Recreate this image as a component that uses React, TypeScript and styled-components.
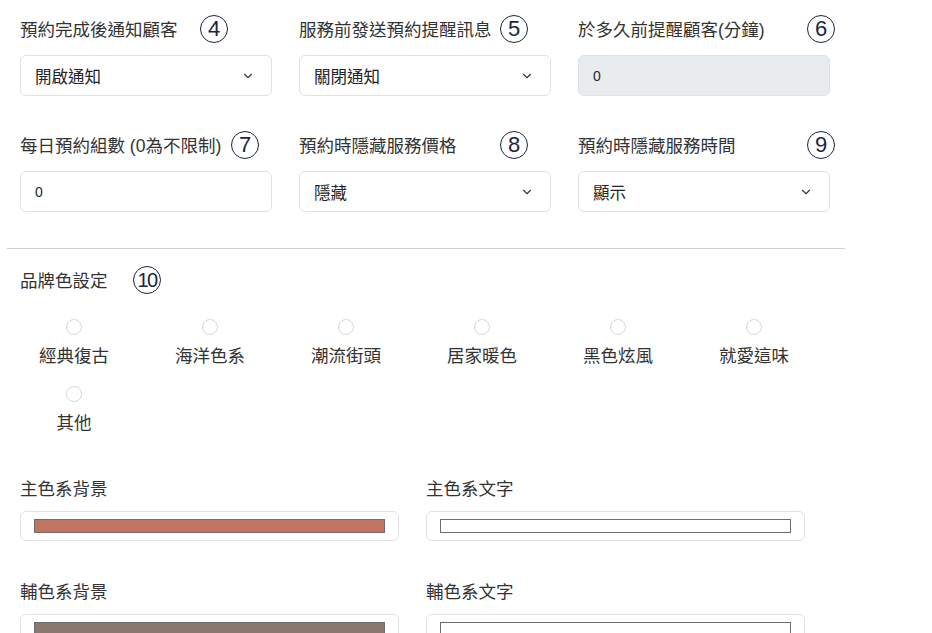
import { createGlobalStyle } from 'styled-components';
import styled from 'styled-components';
import { ChevronDown } from 'lucide-react';

const GlobalStyle = createGlobalStyle`
  body {
    margin: 0;
    background: #fff;
    overflow: hidden;
    font-family: "Liberation Sans", "Noto Sans CJK TC", sans-serif;
    color: #333;
  }
`

type Field = {
  label: string;
  badge: string;
  badgeX: number;
  kind: 'select' | 'input' | 'disabled';
  value: string;
};

// badgeX: left offset of the annotation circle inside its field
const topFields: Field[] = [
  { label: '預約完成後通知顧客', badge: '4', badgeX: 180, kind: 'select', value: '開啟通知' },
  { label: '服務前發送預約提醒訊息', badge: '5', badgeX: 201, kind: 'select', value: '關閉通知' },
  { label: '於多久前提醒顧客(分鐘)', badge: '6', badgeX: 229, kind: 'disabled', value: '0' },
  { label: '每日預約組數 (0為不限制)', badge: '7', badgeX: 211, kind: 'input', value: '0' },
  { label: '預約時隱藏服務價格', badge: '8', badgeX: 201, kind: 'select', value: '隱藏' },
  { label: '預約時隱藏服務時間', badge: '9', badgeX: 229, kind: 'select', value: '顯示' },
]

const themes = ['經典復古', '海洋色系', '潮流街頭', '居家暖色', '黑色炫風', '就愛這味', '其他']

const colorFields = [
  { label: '主色系背景', color: '#c07461' },
  { label: '主色系文字', color: '#ffffff' },
  { label: '輔色系背景', color: '#8a7870' },
  { label: '輔色系文字', color: '#ffffff' },
]

const App = () => {
  return (
    <Page>
      <GlobalStyle />
      <FieldGrid>
        {topFields.map((f) => (
          <FieldCell key={f.label}>
            <LabelRow>
              {f.label}
              <Badge $x={f.badgeX}>{f.badge}</Badge>
            </LabelRow>
            {f.kind === 'select' ? (
              <SelectBox>
                <span>{f.value}</span>
                <ChevronDown size={14} strokeWidth={2} color="#343a40" />
              </SelectBox>
            ) : (
              <InputBox $disabled={f.kind === 'disabled'}>{f.value}</InputBox>
            )}
          </FieldCell>
        ))}
      </FieldGrid>

      <Divider />

      <Section>
        <LabelRow>
          品牌色設定
          <Badge $x={113} $wide>10</Badge>
        </LabelRow>
        <RadioGrid>
          {themes.map((t) => (
            <RadioItem key={t}>
              <RadioCircle />
              <RadioLabel>{t}</RadioLabel>
            </RadioItem>
          ))}
        </RadioGrid>

        <ColorGrid>
          {colorFields.map((c) => (
            <FieldCell key={c.label}>
              <ColorLabel>{c.label}</ColorLabel>
              <ColorBox>
                <Swatch style={{ background: c.color }} />
              </ColorBox>
            </FieldCell>
          ))}
        </ColorGrid>
      </Section>
    </Page>
  )
}

const Page = styled.div`
  width: 838px;
  padding: 18px 0 0 7px;
`

const FieldGrid = styled.div`
  display: grid;
  grid-template-columns: repeat(3, 252px);
  column-gap: 27px;
  row-gap: 38px;
  padding: 0 13px;
`

const FieldCell = styled.div`
  display: flex;
  flex-direction: column;
`

const LabelRow = styled.div`
  position: relative;
  height: 24px;
  line-height: 24px;
  font-size: 17.5px;
  color: #333;
  white-space: nowrap;
  margin-bottom: 13px;
`

const Badge = styled.span<{ $x: number; $wide?: boolean }>`
  position: absolute;
  left: ${(p) => p.$x}px;
  top: -3px;
  width: 28px;
  height: 28px;
  border: 1.7px solid #1c2640;
  border-radius: 50%;
  box-sizing: border-box;
  display: flex;
  align-items: center;
  justify-content: center;
  font-family: "Liberation Sans", sans-serif;
  font-size: ${(p) => (p.$wide ? 20 : 22)}px;
  letter-spacing: ${(p) => (p.$wide ? '-1.5px' : '0')};
  color: #1c2640;
  line-height: 1;
`

const SelectBox = styled.div`
  height: 41px;
  box-sizing: border-box;
  border: 1px solid #dee2e6;
  border-radius: 6px;
  display: flex;
  align-items: center;
  justify-content: space-between;
  padding: 0 16px 0 14px;
  font-size: 16.5px;
  color: #212529;
  background: #fff;
`

const InputBox = styled.div<{ $disabled?: boolean }>`
  height: 41px;
  box-sizing: border-box;
  border: 1px solid #dee2e6;
  border-radius: 6px;
  display: flex;
  align-items: center;
  padding: 0 14px;
  font-size: 14px;
  color: #212529;
  background: ${(p) => (p.$disabled ? '#e9ecef' : '#fff')};
`

const Divider = styled.hr`
  margin: 36px 0 20px;
  border: none;
  border-top: 1px solid #cfcfcf;
`

const Section = styled.div`
  padding: 0 13px;
`

const RadioGrid = styled.div`
  display: grid;
  grid-template-columns: repeat(6, 108px);
  column-gap: 28px;
  row-gap: 18px;
  margin-top: 26px;
`

const RadioItem = styled.div`
  display: flex;
  flex-direction: column;
  align-items: center;
  gap: 9px;
`

const RadioCircle = styled.span`
  width: 16px;
  height: 16px;
  border-radius: 50%;
  border: 1px solid #d3d8de;
  box-sizing: border-box;
  background: #fff;
`

const RadioLabel = styled.span`
  font-size: 17.5px;
  line-height: 24px;
  color: #333;
`

const ColorGrid = styled.div`
  display: grid;
  grid-template-columns: repeat(2, 379px);
  column-gap: 27px;
  row-gap: 39px;
  margin-top: 42px;
`

const ColorLabel = styled.div`
  height: 24px;
  line-height: 24px;
  font-size: 17.5px;
  color: #333;
  margin-bottom: 10px;
`

const ColorBox = styled.div`
  height: 30px;
  box-sizing: border-box;
  border: 1px solid #dee2e6;
  border-radius: 6px;
  padding: 7px 13px;
  display: flex;
`

const Swatch = styled.div`
  flex: 1;
  height: 14px;
  box-sizing: border-box;
  border: 1px solid #6d6d6d;
`

export default App;
